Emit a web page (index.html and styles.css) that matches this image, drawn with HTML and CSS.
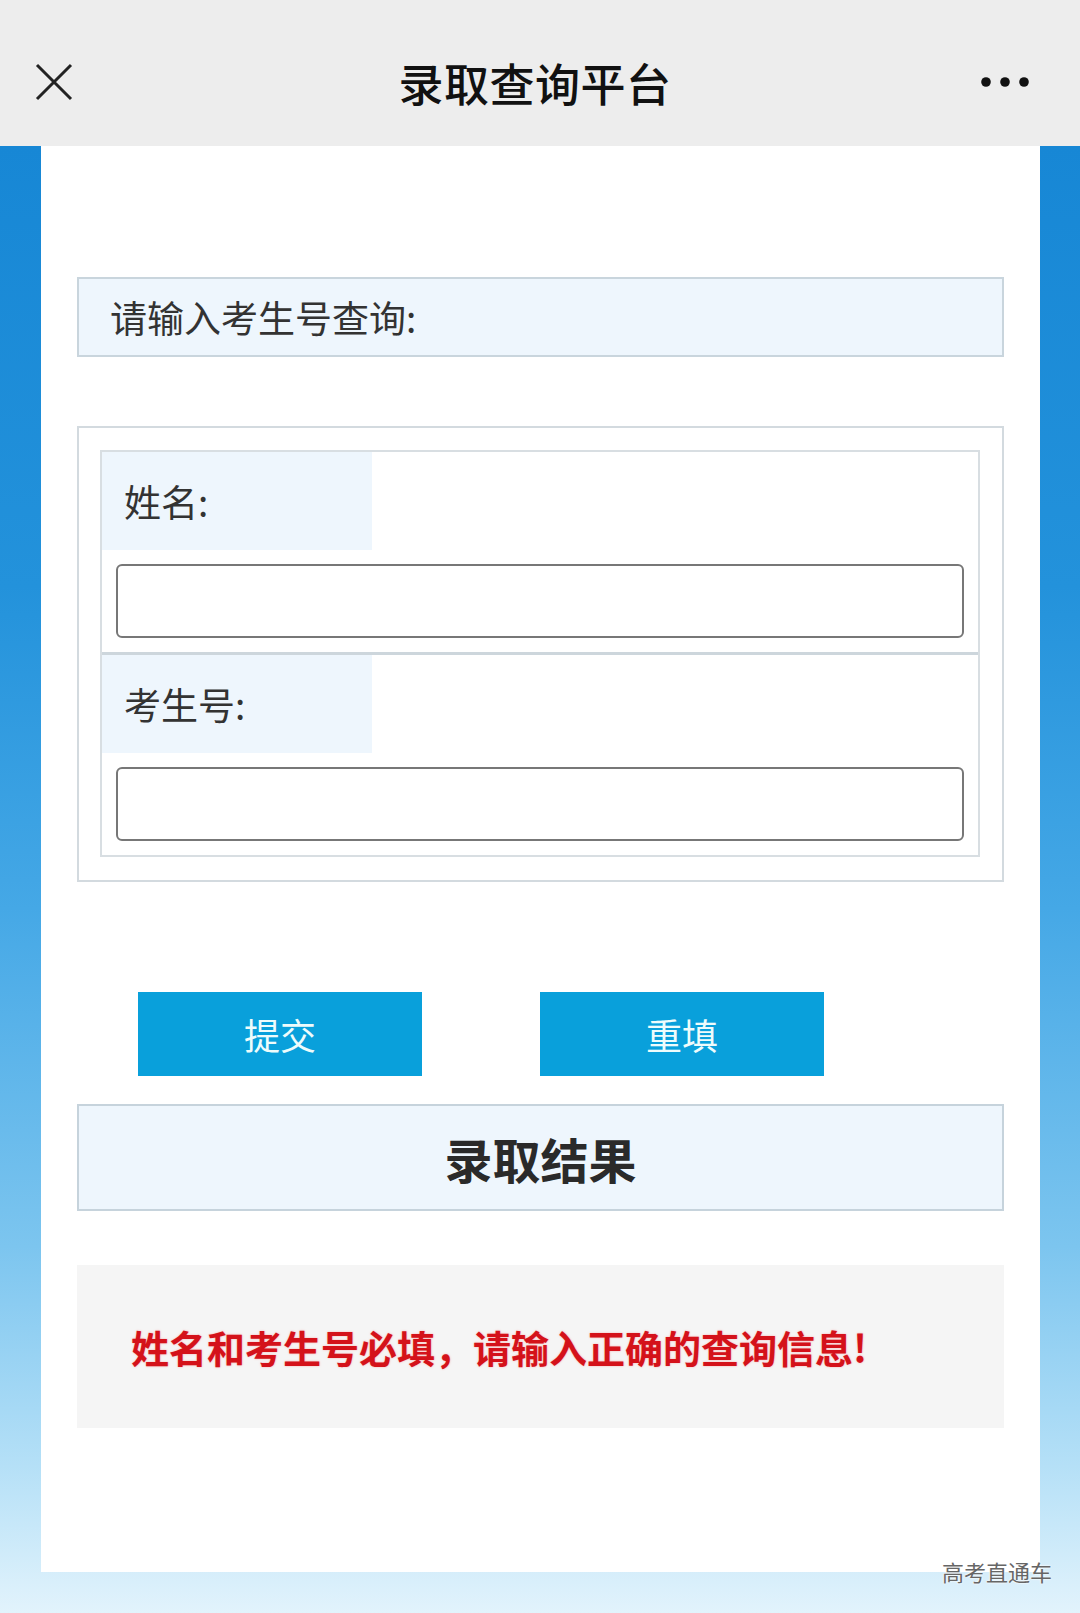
FILE: index.html
```html
<!DOCTYPE html>
<html lang="zh-CN">
<head>
  <meta charset="UTF-8">
  <meta name="viewport" content="width=device-width, initial-scale=1.0">
  <title>录取查询平台</title>
  <link rel="stylesheet" href="styles.css">
</head>
<body>

<div class="topbar">
  <div class="topbar-left">
    <svg class="icon-close" width="38" height="38" viewBox="0 0 38 38">
      <path d="M2 2 L36 36 M36 2 L2 36" stroke="#222" stroke-width="3" fill="none"/>
    </svg>
  </div>
  <div class="topbar-title">录取查询平台</div>
  <div class="topbar-right">
    <svg class="icon-more" width="48" height="10" viewBox="0 0 48 10">
      <circle cx="5" cy="5" r="4.8" fill="#111"/>
      <circle cx="24" cy="5" r="4.8" fill="#111"/>
      <circle cx="43" cy="5" r="4.8" fill="#111"/>
    </svg>
  </div>
</div>

<div class="page">
  <div class="card">
    <div class="tip">请输入考生号查询:</div>

    <div class="form-box">
      <div class="form-inner">
        <div class="field">
          <div class="label">姓名:</div>
          <input class="text-input" type="text">
        </div>
        <div class="field field-next">
          <div class="label">考生号:</div>
          <input class="text-input" type="text">
        </div>
      </div>
    </div>

    <div class="actions">
      <button class="btn">提交</button>
      <button class="btn">重填</button>
    </div>

    <div class="result-title">录取结果</div>

    <div class="message">姓名和考生号必填，请输入正确的查询信息!</div>
  </div>

  <div class="watermark">高考直通车</div>
</div>

</body>
</html>
```

FILE: styles.css
```css
/* 页面 */
body {
  margin: 0;
  font-family: "Noto Sans CJK SC", "Noto Sans", sans-serif;
  color: #333;
  background: #ededed;
}

/* 顶部标题栏 */
.topbar {
  height: 146px;
  box-sizing: border-box;
  padding-top: 18px;
  background: #ededed;
  display: grid;
  grid-template-columns: 1fr auto 1fr;
  align-items: center;
}

.topbar-left {
  padding-left: 35px;
  display: flex;
  align-items: center;
}

.topbar-title {
  font-size: 45px;
  font-weight: 500;
  color: #111;
  margin-left: -10px;
  letter-spacing: 0.5px;
}

.topbar-right {
  display: flex;
  justify-content: flex-end;
  padding-right: 51px;
}

/* 蓝色背景 */
.page {
  position: relative;
  padding: 0 40px 41px 41px;
  background: linear-gradient(#1787d5 0%, #2392db 30%, #45a8e6 52%, #7cc5ef 75%, #b5e0f7 90%, #e2f3fc 100%);
}

/* 白色卡片 */
.card {
  background: #fff;
  height: 1426px;
  box-sizing: border-box;
  padding: 131px 36px 0 36px;
}

/* 提示栏 */
.tip {
  height: 80px;
  box-sizing: border-box;
  border: 2px solid #c9d5dd;
  background: #eef6fd;
  padding-left: 31px;
  display: flex;
  align-items: center;
  font-size: 37px;
  color: #333;
}

/* 表单框 */
.form-box {
  margin-top: 69px;
  border: 2px solid #d3dadf;
  padding: 22px 22px 23px 21px;
}

.form-inner {
  border: 2px solid #d8dee2;
}

.field {
  padding-bottom: 14px;
}

.field-next {
  border-top: 3px solid #cdd6dc;
}

.label {
  width: 270px;
  height: 98px;
  box-sizing: border-box;
  padding-left: 22px;
  background: #eef6fd;
  display: flex;
  align-items: center;
  font-size: 37px;
  color: #333;
}

.text-input {
  display: block;
  width: calc(100% - 28px);
  height: 74px;
  box-sizing: border-box;
  margin: 14px 14px 0 14px;
  border: 2px solid #777;
  border-radius: 6px;
  background: #fff;
  font-size: 30px;
  outline: none;
}

/* 按钮 */
.actions {
  margin-top: 110px;
  padding-left: 61px;
  display: flex;
  gap: 118px;
}

.btn {
  width: 284px;
  height: 84px;
  border: none;
  background: #09a0db;
  color: #eefcfc;
  font-family: inherit;
  font-size: 36px;
  cursor: pointer;
}

/* 录取结果 */
.result-title {
  margin-top: 28px;
  height: 107px;
  box-sizing: border-box;
  border: 2px solid #c6d3dc;
  background: #eef6fd;
  display: flex;
  align-items: center;
  justify-content: center;
  font-size: 48px;
  font-weight: bold;
  color: #2a2a2a;
}

.message {
  margin-top: 54px;
  height: 163px;
  box-sizing: border-box;
  padding-left: 54px;
  background: #f5f5f5;
  display: flex;
  align-items: center;
  font-size: 38px;
  font-weight: bold;
  color: #d4121a;
  text-shadow: 0 0 2px rgba(255, 90, 90, 0.5);
}

/* 水印 */
.watermark {
  position: absolute;
  right: 28px;
  bottom: 26px;
  font-size: 22px;
  color: #666;
  text-shadow: 0 0 2px #fff, 0 0 2px #fff;
}
```
